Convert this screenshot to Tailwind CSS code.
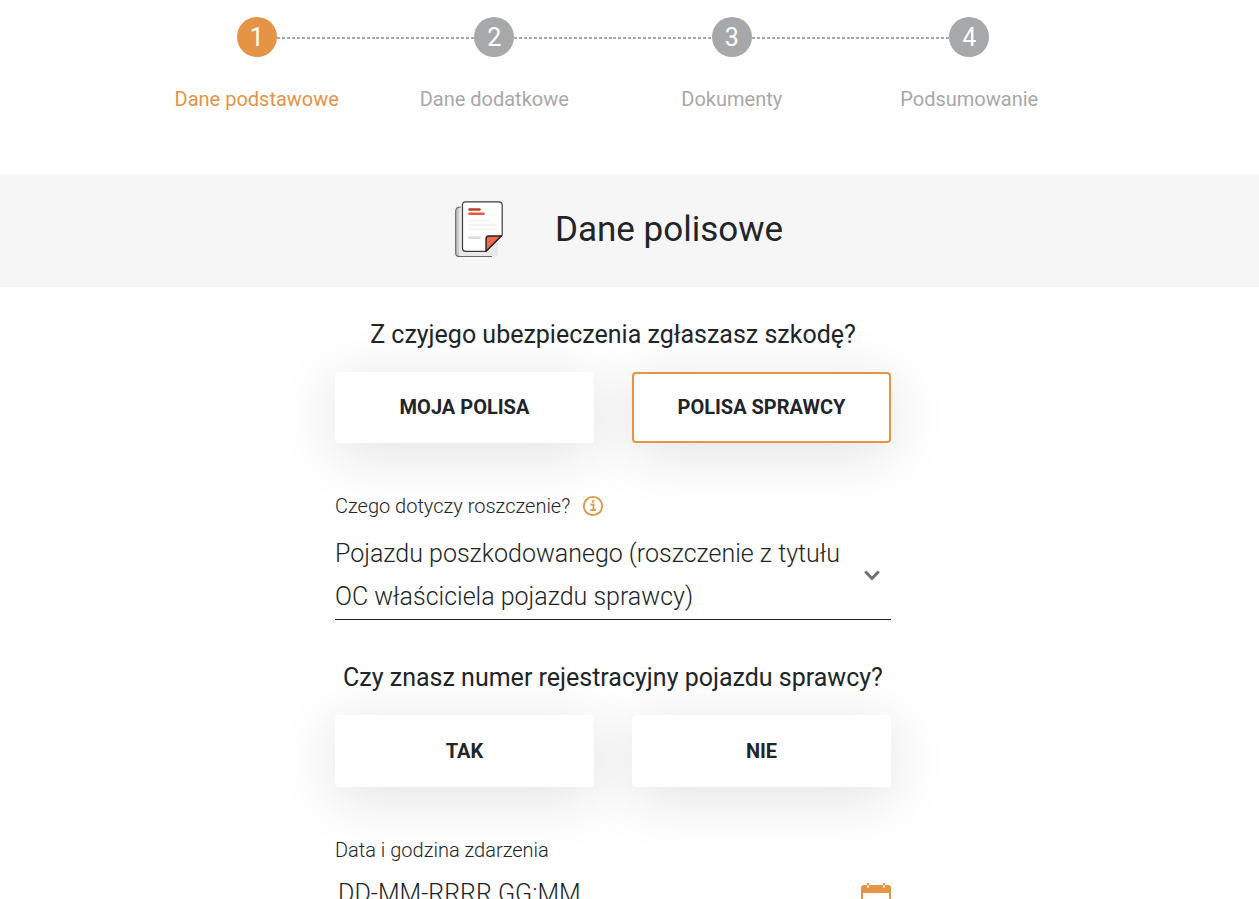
<!DOCTYPE html>
<html lang="pl">
<head>
<meta charset="utf-8">
<meta name="viewport" content="width=device-width, initial-scale=1">
<title>Dane polisowe</title>
<script src="https://cdn.jsdelivr.net/npm/@tailwindcss/browser@4"></script>
</head>
<body class="bg-white font-['Roboto',sans-serif] text-[#212529]">
<nav aria-label="Kroki" class="pt-[17px] pr-[33px]">
  <ol class="mx-auto grid max-w-[950px] grid-cols-4 text-center text-xl text-[#a7a8aa]">
    <li class="flex flex-col items-center text-[#e59345]" aria-current="step">
      <div class="flex w-full items-center">
        <span class="flex-1"></span>
        <span class="flex size-10 items-center justify-center rounded-full bg-[#e59345] text-[25px] text-white">1</span>
        <span class="mt-0.5 h-0.5 flex-1 bg-[repeating-linear-gradient(to_right,#a7a8aa_0_3px,transparent_3px_5px)]"></span>
      </div>
      <span class="mt-7 leading-7">Dane podstawowe</span>
    </li>
    <li class="flex flex-col items-center">
      <div class="flex w-full items-center">
        <span class="mt-0.5 h-0.5 flex-1 bg-[repeating-linear-gradient(to_right,#a7a8aa_0_3px,transparent_3px_5px)]"></span>
        <span class="flex size-10 items-center justify-center rounded-full bg-[#a7a8aa] text-[25px] text-white">2</span>
        <span class="mt-0.5 h-0.5 flex-1 bg-[repeating-linear-gradient(to_right,#a7a8aa_0_3px,transparent_3px_5px)]"></span>
      </div>
      <span class="mt-7 leading-7">Dane dodatkowe</span>
    </li>
    <li class="flex flex-col items-center">
      <div class="flex w-full items-center">
        <span class="mt-0.5 h-0.5 flex-1 bg-[repeating-linear-gradient(to_right,#a7a8aa_0_3px,transparent_3px_5px)]"></span>
        <span class="flex size-10 items-center justify-center rounded-full bg-[#a7a8aa] text-[25px] text-white">3</span>
        <span class="mt-0.5 h-0.5 flex-1 bg-[repeating-linear-gradient(to_right,#a7a8aa_0_3px,transparent_3px_5px)]"></span>
      </div>
      <span class="mt-7 leading-7">Dokumenty</span>
    </li>
    <li class="flex flex-col items-center">
      <div class="flex w-full items-center">
        <span class="mt-0.5 h-0.5 flex-1 bg-[repeating-linear-gradient(to_right,#a7a8aa_0_3px,transparent_3px_5px)]"></span>
        <span class="flex size-10 items-center justify-center rounded-full bg-[#a7a8aa] text-[25px] text-white">4</span>
        <span class="flex-1"></span>
      </div>
      <span class="mt-7 leading-7">Podsumowanie</span>
    </li>
  </ol>
</nav>

<header class="mt-[61px] flex h-[113px] items-center justify-center gap-[52px] bg-[#f6f6f6] pr-[21px]">
  <svg class="h-[59px] w-12" viewBox="0 0 48 59" fill="none" aria-hidden="true">
    <path d="M4 6H38V55.500H4Q.7 55.500 .7 52V10Q.7 6 4 6Z" fill="#c9c9c9"/>
    <path d="M5 6H43V53Q43 55.500 40 55.500H7Q4 55.500 4 52V10Z" fill="#e9e9e7"/>
    <path d="M6 6Q.7 6 .7 10V52Q.7 55.500 4 55.500H37" stroke="#6a6a6a" stroke-width="1.200"/>
    <path d="M10.500 .8H44Q47.200 .8 47.200 4V34L31 50.300H10.500Q7.500 50.300 7.500 47.300V3.800Q7.500 .8 10.500 .8Z" fill="#fff" stroke="#3c3c3c" stroke-width="1.200"/>
    <path d="M31 50.300V38Q31 35 34 35H46.300Z" fill="#f4694c" stroke="#222" stroke-width="1.400" stroke-linejoin="round"/>
    <g stroke-width="2.600" stroke-linecap="round">
      <path d="M14.500 8.500H24.500" stroke="#b8402a"/>
      <path d="M14.500 12.700H28.500" stroke="#f0553c"/>
      <path d="M14.500 19.500H33.500M14.500 24H40.500M14.500 28.500H40.500" stroke="#f5f5f5"/>
      <path d="M14.500 36.600H24.500" stroke="#dcdcdc"/>
    </g>
  </svg>
  <h1 class="text-[35px]">Dane polisowe</h1>
</header>

<main class="pr-[33px]">
  <form class="mx-auto max-w-[556px] pb-10">
    <fieldset>
      <legend class="w-full pt-[30px] text-center text-[25px] leading-9">Z czyjego ubezpieczenia zgłaszasz szkodę?</legend>
      <div class="mt-[19px] grid grid-cols-2 gap-[38px]">
        <button type="button" aria-pressed="false" class="h-[71px] rounded bg-white pb-0.5 text-xl font-bold shadow-[0_10px_60px_rgba(0,0,0,0.12)]">MOJA POLISA</button>
        <button type="button" aria-pressed="true" class="h-[71px] rounded border-2 border-[#e59345] bg-white pb-0.5 text-xl font-bold shadow-[0_10px_60px_rgba(0,0,0,0.12)]">POLISA SPRAWCY</button>
      </div>
    </fieldset>

    <div class="mt-[49px] flex items-center gap-3 text-xl font-light">
      <label for="claim">Czego dotyczy roszczenie?</label>
      <button type="button" aria-label="Informacja">
        <svg class="size-[22px]" viewBox="0 0 22 22" fill="none" stroke="#e59345" aria-hidden="true">
          <circle cx="11" cy="11" r="9.200" stroke-width="1.800"/>
          <path d="M8.500 9.500H11.500V15M8.300 15.200H14" stroke-width="1.800"/>
          <path d="M10 6.300H12.200" stroke-width="2.200"/>
        </svg>
      </button>
    </div>
    <div class="mt-3 grid items-center border-b border-[#212529]">
      <select id="claim" class="col-start-1 row-start-1 h-[87px] w-full appearance-none pr-10 pb-0.5 text-[25px] leading-[43px] font-light whitespace-normal">
        <option>Pojazdu poszkodowanego (roszczenie z tytułu OC właściciela pojazdu sprawcy)</option>
      </select>
      <svg class="pointer-events-none col-start-1 row-start-1 mr-[11px] h-3 w-4 justify-self-end" viewBox="0 0 16 12" fill="none" stroke="#6f6f70" stroke-width="2.800" aria-hidden="true"><path d="M1.200 1.500L8 8.500L14.800 1.500"/></svg>
    </div>

    <fieldset>
      <legend class="w-full pt-10 text-center text-[25px] leading-9">Czy znasz numer rejestracyjny pojazdu sprawcy?</legend>
      <div class="mt-[19px] grid grid-cols-2 gap-[38px]">
        <button type="button" class="h-[72px] rounded bg-white text-xl font-bold shadow-[0_10px_60px_rgba(0,0,0,0.12)]">TAK</button>
        <button type="button" class="h-[72px] rounded bg-white text-xl font-bold shadow-[0_10px_60px_rgba(0,0,0,0.12)]">NIE</button>
      </div>
    </fieldset>

    <label for="date" class="mt-[49px] block text-xl font-light">Data i godzina zdarzenia</label>
    <div class="mt-2 flex items-end border-b border-[#212529]">
      <input id="date" type="text" placeholder="DD-MM-RRRR GG:MM" class="h-[43px] min-w-0 flex-1 px-[3px] text-[25px] font-light placeholder:text-[#212529]">
      <button type="button" aria-label="Wybierz datę">
        <svg class="h-8 w-[30px]" viewBox="0 0 30 32" aria-hidden="true">
          <path d="M3 2H27Q30 2 30 5V29Q30 32 27 32H3Q0 32 0 29V5Q0 2 3 2ZM2 10V30H28V10Z" fill="#e59345" fill-rule="evenodd"/>
          <path d="M6 2H8V4.500H6ZM22 2H24V4.500H22Z" fill="#fff"/>
          <path d="M6 0H8V2.500H6ZM22 0H24V2.500H22Z" fill="#e59345"/>
        </svg>
      </button>
    </div>
  </form>
</main>
</body>
</html>
